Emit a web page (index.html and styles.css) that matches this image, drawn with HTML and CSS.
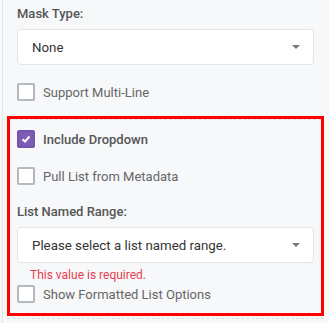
FILE: index.html
```html
<!DOCTYPE html>
<html lang="en">
<head>
  <meta charset="UTF-8">
  <meta name="viewport" content="width=device-width, initial-scale=1.0">
  <title>Field Settings</title>
  <link rel="stylesheet" href="styles.css">
</head>
<body>
  <div class="panel">
    <label class="field-label">Mask Type:</label>
    <div class="select">
      <span class="select-value">None</span>
      <span class="select-arrow"></span>
    </div>

    <div class="check-row row-multiline">
      <span class="check"></span>
      <span class="check-text">Support Multi-Line</span>
    </div>

    <div class="dropdown-section">
      <div class="section-inner">
        <div class="check-row">
          <span class="check checked">
            <svg width="10" height="8" viewBox="0 0 10 8"><path d="M1.5 4.2 L4 6.5 L8.5 1.5" fill="none" stroke="#fff" stroke-width="2"/></svg>
          </span>
          <span class="check-text strong">Include Dropdown</span>
        </div>
        <div class="check-row row-gap">
          <span class="check"></span>
          <span class="check-text">Pull List from Metadata</span>
        </div>

        <label class="field-label label-gap">List Named Range:</label>
        <div class="select">
          <span class="select-value">Please select a list named range.</span>
          <span class="select-arrow"></span>
        </div>
        <div class="error">This value is required.</div>

        <div class="check-row row-formatted">
          <span class="check"></span>
          <span class="check-text">Show Formatted List Options</span>
        </div>
      </div>
    </div>
    <div class="dash-line"></div>
  </div>
</body>
</html>
```

FILE: styles.css
```css
* {
  margin: 0; padding: 0; box-sizing: border-box;
}
body {
  background: #f7f8fa;
  font-family: Roboto, "Liberation Sans", sans-serif;
  padding-left: 2px;
  height: 323px;
  overflow: hidden;
}
.panel {
  border-left: 1px solid #e4e6ea;
  padding: 6px 15px 0 14px;
  min-height: 323px;
}
.field-label {
  display: block;
  font-size: 13px; line-height: 16px;
  font-weight: 500;
  color: #555;
  margin-bottom: 7px;
}
.select {
  height: 36px;
  background: #fff;
  border: 1px solid #e3e5e8;
  border-radius: 4px;
  display: flex;
  align-items: center;
  justify-content: space-between;
  padding: 0 13px 0 14px;
}
.select-value {
  font-size: 13.3px;
  color: #333;
}
.select-arrow {
  width: 0; height: 0;
  border-left: 4px solid transparent;
  border-right: 4px solid transparent;
  border-top: 4px solid #7a7a7a;
}
.check-row {
  display: flex;
  align-items: center;
  gap: 8px;
  height: 18px;
}
.row-multiline { margin-top: 18px; }
.row-gap { margin-top: 19px; }
.row-formatted { margin-top: 3px; }
.check {
  width: 18px; height: 18px;
  border: 2px solid #b4b9bf;
  border-radius: 2px;
  background: #fff;
  display: flex;
  align-items: center;
  justify-content: center;
}
.check.checked {
  background: #7e5cb6;
  border-color: #7454ad;
}
.check-text {
  font-size: 13px;
  color: #666;
}
.check-text.strong {
  font-weight: 500;
  color: #555;
}
.dropdown-section {
  margin: 15px -10px 0;
  border: 3px solid #f00;
}
.section-inner {
  border-top: 1px dashed #dde0e4;
  padding: 10px 7px 10px;
}
.label-gap { margin-top: 19px; }
.error {
  font-size: 12px; line-height: 14px;
  color: #e8404f;
  margin-top: 5px;
  padding-left: 13px;
}
.dash-line {
  margin: 2px -10px 0;
  border-top: 1px dashed #dde0e4;
}
```
